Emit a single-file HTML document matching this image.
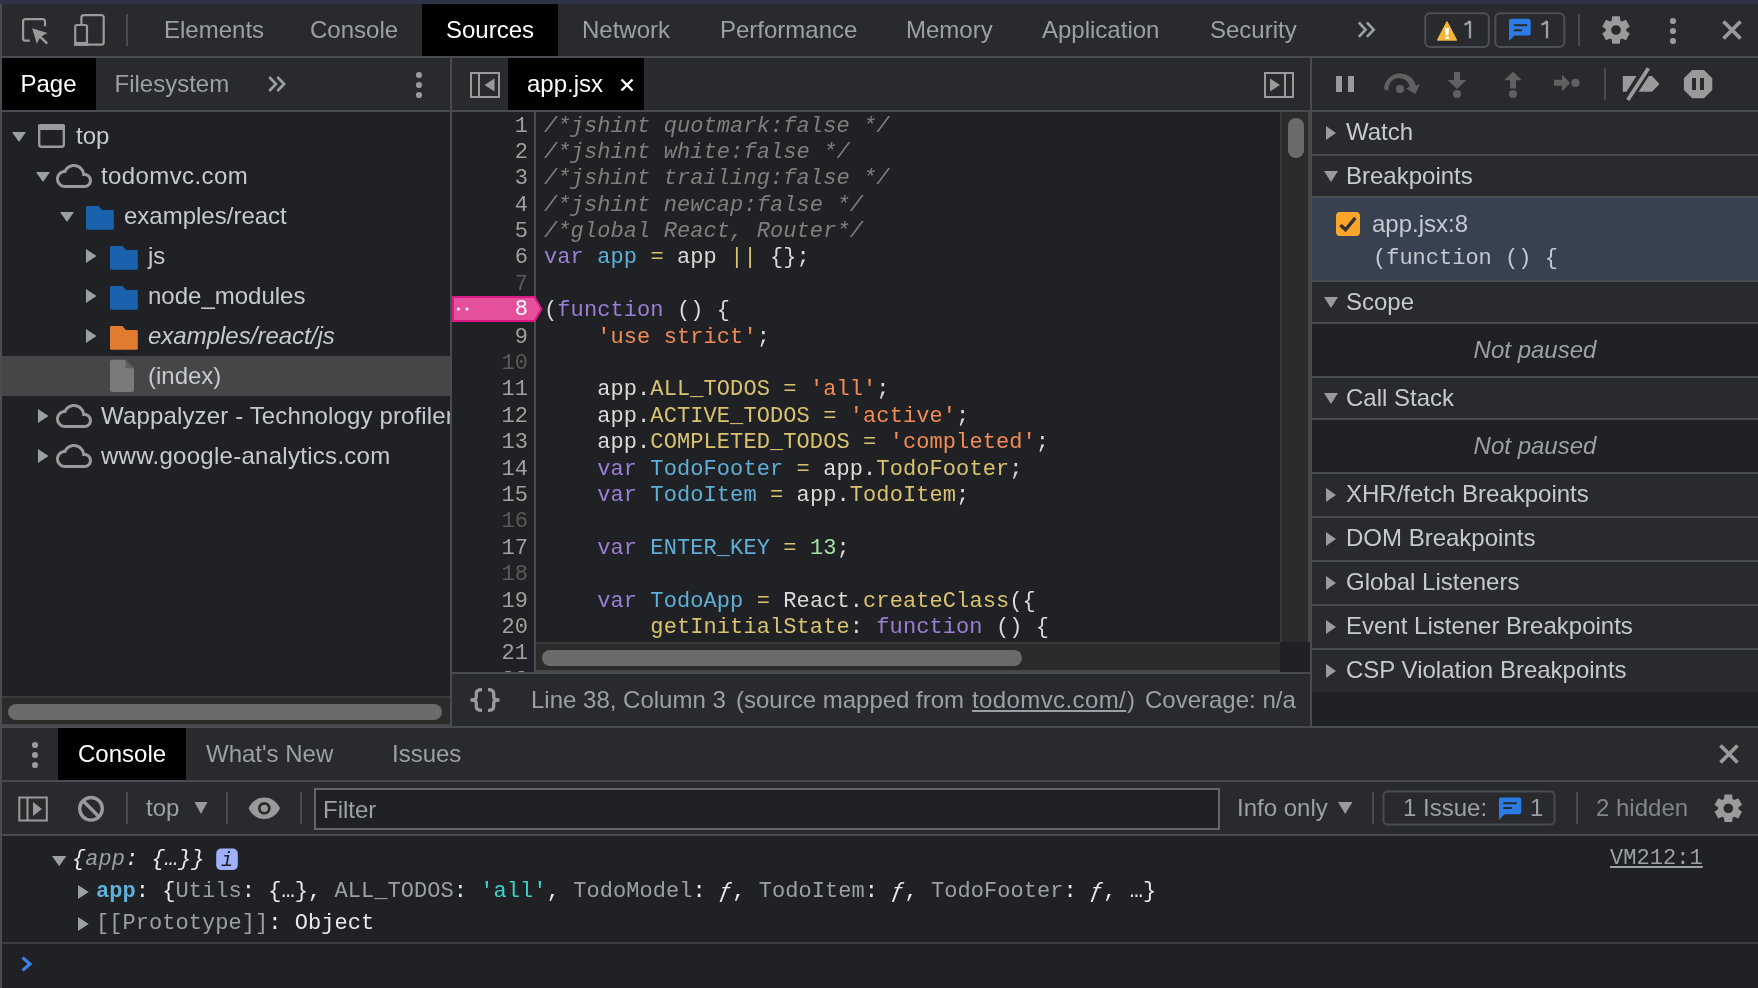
<!DOCTYPE html>
<html><head><meta charset="utf-8">
<style>
*{box-sizing:border-box;margin:0;padding:0}
html,body{width:1758px;height:988px;overflow:hidden;background:#202124;font-family:"Liberation Sans",sans-serif;-webkit-font-smoothing:antialiased;}
.a{position:absolute}
.tb{background:#292a2d}
.bd{background:#494c50}
.txt{font-size:24px;color:#9aa0a6;white-space:nowrap;line-height:28px}
.mono{font-family:"Liberation Mono",monospace}
svg{position:absolute;overflow:visible}
.ln{height:26.4px;line-height:26.4px;font-size:22px;white-space:pre}
.code .ln{letter-spacing:0.09px}
.code .ln{color:#dadada}
.cl{font-size:22px;line-height:28px;white-space:pre;letter-spacing:0.05px}
#root{position:absolute;left:0;top:0;width:1758px;height:988px;will-change:transform;background:#202124;overflow:hidden}
</style></head><body><div id="root">
<!-- top strip -->
<div class="a" style="left:0;top:0;width:1758px;height:4px;background:#2f3346"></div>
<!-- left border -->
<div class="a bd" style="left:0;top:4px;width:2px;height:984px"></div>

<!-- MAIN TOOLBAR -->
<div class="a tb" style="left:2px;top:4px;width:1756px;height:52px"></div>
<div class="a bd" style="left:2px;top:56px;width:1756px;height:2px"></div>


<!-- main toolbar content -->
<svg style="left:0;top:0" width="1758" height="58">
 <g fill="none" stroke="#9a9a9a" stroke-width="2.2">
  <path d="M45 26.2 V21.5 Q45 19.1 42.6 19.1 H25.5 Q23.1 19.1 23.1 21.5 V38.3 Q23.1 40.7 25.5 40.7 H29.8"/>
 </g>
 <path d="M32.2 28.2 L47.5 33 L41.5 36.2 L48.1 42.8 L46.3 44.6 L39.8 38 L36.8 43.8 Z" fill="#9a9a9a"/>
 <g fill="none" stroke="#9a9a9a" stroke-width="2.2">
  <path d="M81.4 24 V17.5 Q81.4 15.1 83.8 15.1 H101.3 Q103.7 15.1 103.7 17.5 V42.3 Q103.7 44.7 101.3 44.7 H86.6"/>
  <rect x="75.2" y="25" width="11.8" height="19.7" rx="1.8"/>
 </g>
 <rect x="74.1" y="41.9" width="13.9" height="4" fill="#9a9a9a"/>
 <rect x="126" y="14" width="2" height="32" fill="#494c50"/>
 <path d="M1358.8 22.5 L1365.6 29.7 L1358.8 36.9 M1366.9 22.5 L1373.7 29.7 L1366.9 36.9" fill="none" stroke="#9aa0a6" stroke-width="2.6"/>
 <rect x="1425.2" y="13.2" width="63.6" height="33.8" rx="5" fill="none" stroke="#4d5054" stroke-width="2"/>
 <path d="M1447 22 L1456.3 40 H1437.7 Z" fill="#f3b638" stroke="#f3b638" stroke-width="1.5" stroke-linejoin="round"/>
 <path d="M1444.9 28 H1449.1 L1448.4 35.2 H1445.6 Z" fill="#fff"/>
 <rect x="1445.4" y="36.6" width="3.4" height="2.4" fill="#fff"/>
 <rect x="1495.3" y="13.2" width="69" height="33.8" rx="5" fill="none" stroke="#4d5054" stroke-width="2"/>
 <path d="M1511.5 18.8 H1528.2 Q1530.7 18.8 1530.7 21.3 V33 Q1530.7 35.5 1528.2 35.5 H1514.5 L1509 41 V21.3 Q1509 18.8 1511.5 18.8 Z" fill="#2c7ce5"/>
 <rect x="1513.9" y="24.2" width="13.2" height="2" fill="#292a2d"/>
 <rect x="1513.9" y="29.3" width="8.1" height="2" fill="#292a2d"/>
 <rect x="1578" y="14" width="2" height="32" fill="#494c50"/>
 <g transform="translate(1616 30)" fill="#9a9a9a">
  <path d="M-4.30 -9.36 L-3.80 -13.68 L3.80 -13.68 L4.30 -9.36 L5.96 -8.40 L9.95 -10.13 L13.75 -3.55 L10.26 -0.96 L10.26 0.96 L13.75 3.55 L9.95 10.13 L5.96 8.40 L4.30 9.36 L3.80 13.68 L-3.80 13.68 L-4.30 9.36 L-5.96 8.40 L-9.95 10.13 L-13.75 3.55 L-10.26 0.96 L-10.26 -0.96 L-13.75 -3.55 L-9.95 -10.13 L-5.96 -8.40 Z M0 -4.8 A4.8 4.8 0 1 0 0.01 -4.8 Z" fill-rule="evenodd"/>
 </g>
 <circle cx="1673" cy="21" r="3.1" fill="#9a9a9a"/>
 <circle cx="1673" cy="31" r="3.1" fill="#9a9a9a"/>
 <circle cx="1673" cy="41" r="3.1" fill="#9a9a9a"/>
 <path d="M1723.5 21.5 L1740.5 38.5 M1740.5 21.5 L1723.5 38.5" stroke="#9a9a9a" stroke-width="3.8"/>
</svg>
<div class="a" style="left:422px;top:4px;width:136px;height:52px;background:#000"></div>
<div class="a txt" style="left:164px;top:16px">Elements</div>
<div class="a txt" style="left:310px;top:16px">Console</div>
<div class="a txt" style="left:446px;top:16px;color:#fff">Sources</div>
<div class="a txt" style="left:582px;top:16px">Network</div>
<div class="a txt" style="left:720px;top:16px">Performance</div>
<div class="a txt" style="left:906px;top:16px">Memory</div>
<div class="a txt" style="left:1042px;top:16px">Application</div>
<div class="a txt" style="left:1210px;top:16px">Security</div>
<svg style="left:0;top:0" width="1" height="1"><path d="M1470 21 V38.3 M1464.5 24.6 Q1468.3 23.6 1470 21" fill="none" stroke="#9aa0a6" stroke-width="2.3"/></svg>
<svg style="left:0;top:0" width="1" height="1"><path d="M1547 21 V38.3 M1541.5 24.6 Q1545.3 23.6 1547 21" fill="none" stroke="#9aa0a6" stroke-width="2.3"/></svg>

<!-- PANELS -->
<div id="nav" class="a" style="left:2px;top:58px;width:448px;height:668px;background:#202124"></div>

<!-- NAVIGATOR -->
<div class="a tb" style="left:2px;top:58px;width:448px;height:52px"></div>
<div class="a" style="left:2px;top:58px;width:94px;height:52px;background:#000"></div>
<div class="a bd" style="left:2px;top:110px;width:448px;height:2px"></div>
<div class="a txt" style="left:20.5px;top:70px;color:#fff">Page</div>
<div class="a txt" style="left:114.5px;top:70px">Filesystem</div>
<svg style="left:0;top:0" width="450" height="112">
 <path d="M269.2 77 L276 84 L269.2 91 M277.3 77 L284.1 84 L277.3 91" fill="none" stroke="#9aa0a6" stroke-width="2.6"/>
 <circle cx="419" cy="75" r="3.1" fill="#9a9a9a"/>
 <circle cx="419" cy="85" r="3.1" fill="#9a9a9a"/>
 <circle cx="419" cy="95" r="3.1" fill="#9a9a9a"/>
</svg>
<div class="a" style="left:2px;top:356px;width:448px;height:40px;background:#464646"></div>
<svg style="left:0;top:0" width="450" height="480">
 <g fill="#9aa0a6">
  <path d="M12 132 H26 L19 142 Z"/>
  <path d="M36 172 H50 L43 182 Z"/>
  <path d="M60 212 H74 L67 222 Z"/>
  <path d="M86 249 V263 L96.5 256 Z"/>
  <path d="M86 289 V303 L96.5 296 Z"/>
  <path d="M86 329 V343 L96.5 336 Z"/>
  <path d="M38 409 V423 L48.5 416 Z"/>
  <path d="M38 449 V463 L48.5 456 Z"/>
 </g>
 <!-- frame icon -->
 <rect x="39.2" y="125.2" width="24.6" height="21.6" rx="2.2" fill="none" stroke="#9a9a9a" stroke-width="2.4"/>
 <rect x="38" y="124" width="27" height="6" rx="2" fill="#9a9a9a"/>
 <!-- clouds -->
 <g fill="#9a9a9a">
  <path transform="translate(56 158) scale(1.5)" fill-rule="evenodd" d="M19.35 10.04C18.67 6.59 15.64 4 12 4 9.11 4 6.6 5.64 5.35 8.04 2.34 8.36 0 10.91 0 14c0 3.31 2.69 6 6 6h13c2.76 0 5-2.24 5-5 0-2.64-2.05-4.78-4.65-4.96zM19 18H6c-2.21 0-4-1.79-4-4s1.79-4 4-4h.71C7.37 7.69 9.48 6 12 6c3.04 0 5.5 2.46 5.5 5.5v.5H19c1.66 0 3 1.340 3 3s-1.34 3-3 3z"/>
  <path transform="translate(56 398) scale(1.5)" fill-rule="evenodd" d="M19.35 10.04C18.67 6.59 15.64 4 12 4 9.11 4 6.6 5.64 5.35 8.04 2.34 8.36 0 10.91 0 14c0 3.31 2.69 6 6 6h13c2.76 0 5-2.24 5-5 0-2.64-2.05-4.78-4.65-4.96zM19 18H6c-2.21 0-4-1.79-4-4s1.79-4 4-4h.71C7.37 7.69 9.48 6 12 6c3.04 0 5.5 2.46 5.5 5.5v.5H19c1.66 0 3 1.340 3 3s-1.34 3-3 3z"/>
  <path transform="translate(56 438) scale(1.5)" fill-rule="evenodd" d="M19.35 10.04C18.67 6.59 15.64 4 12 4 9.11 4 6.6 5.64 5.35 8.04 2.34 8.36 0 10.91 0 14c0 3.31 2.69 6 6 6h13c2.76 0 5-2.24 5-5 0-2.64-2.05-4.78-4.65-4.96zM19 18H6c-2.21 0-4-1.79-4-4s1.79-4 4-4h.71C7.37 7.69 9.48 6 12 6c3.04 0 5.5 2.46 5.5 5.5v.5H19c1.66 0 3 1.340 3 3s-1.34 3-3 3z"/>
 </g>
 <!-- folders -->
 <path d="M86 207.2 Q86 206 87.2 206 H98.4 L102 210 H112.6 Q113.8 210 113.8 211.2 V228.5 Q113.8 229.7 112.6 229.7 H87.2 Q86 229.7 86 228.5 Z" fill="#1a62ae"/>
 <path d="M110 247.2 Q110 246 111.2 246 H122.4 L126 250 H136.6 Q137.8 250 137.8 251.2 V268.5 Q137.8 269.7 136.6 269.7 H111.2 Q110 269.7 110 268.5 Z" fill="#1a62ae"/>
 <path d="M110 287.2 Q110 286 111.2 286 H122.4 L126 290 H136.6 Q137.8 290 137.8 291.2 V308.5 Q137.8 309.7 136.6 309.7 H111.2 Q110 309.7 110 308.5 Z" fill="#1a62ae"/>
 <path d="M110 327.2 Q110 326 111.2 326 H122.4 L126 330 H136.6 Q137.8 330 137.8 331.2 V348.5 Q137.8 349.7 136.6 349.7 H111.2 Q110 349.7 110 348.5 Z" fill="#e07b30"/>
 <!-- file -->
 <path d="M112 359.7 H125.5 L134 368.2 V390 Q134 392 132 392 H112 Q110 392 110 390 V361.7 Q110 359.7 112 359.7 Z" fill="#7a7a7a"/>
 <path d="M125.5 359.7 V368.2 H134 Z" fill="#464646" opacity="0.55"/>
</svg>
<div class="a txt" style="left:76px;top:122px;color:#c5cad1">top</div>
<div class="a txt" style="left:101px;top:162px;color:#c5cad1;letter-spacing:0.4px">todomvc.com</div>
<div class="a txt" style="left:124px;top:202px;color:#c5cad1">examples/react</div>
<div class="a txt" style="left:148px;top:242px;color:#c5cad1">js</div>
<div class="a txt" style="left:148px;top:282px;color:#c5cad1">node_modules</div>
<div class="a txt" style="left:148px;top:322px;color:#c5cad1;font-style:italic">examples/react/js</div>
<div class="a txt" style="left:148px;top:362px;color:#c5cad1">(index)</div>
<div class="a" style="left:2px;top:402px;width:448px;height:40px;overflow:hidden"><div class="a txt" style="left:99px;top:0;color:#c5cad1;letter-spacing:0.15px">Wappalyzer - Technology profiler</div></div>
<div class="a txt" style="left:101px;top:442px;color:#c5cad1;letter-spacing:0.28px">www.google-analytics.com</div>
<!-- nav h scrollbar -->
<div class="a" style="left:2px;top:696px;width:448px;height:30px;background:#2b2b2b;border-top:2px solid #3b3b3b;border-bottom:2px solid #474747"></div>
<div class="a" style="left:8px;top:704px;width:434px;height:16px;border-radius:8px;background:#6b6b6b"></div>

<div class="a bd" style="left:450px;top:58px;width:2px;height:668px"></div>
<div id="ed" class="a" style="left:452px;top:58px;width:858px;height:668px;background:#202124"></div>

<!-- EDITOR -->
<div class="a tb" style="left:452px;top:58px;width:858px;height:52px"></div>
<div class="a" style="left:508px;top:58px;width:136px;height:52px;background:#000"></div>
<div class="a bd" style="left:452px;top:110px;width:858px;height:2px"></div>
<div class="a txt" style="left:527px;top:70px;color:#fff">app.jsx</div>
<svg style="left:0;top:0" width="1310" height="112">
 <rect x="471" y="73" width="28" height="24" fill="none" stroke="#9a9a9a" stroke-width="2"/>
 <rect x="478" y="73" width="2" height="24" fill="#9a9a9a"/>
 <path d="M494.5 78.5 V91.5 L484.5 85 Z" fill="#9a9a9a"/>
 <path d="M621.5 79.5 L632.5 90.5 M632.5 79.5 L621.5 90.5" stroke="#fff" stroke-width="2.4"/>
 <rect x="1265" y="73" width="28" height="24" fill="none" stroke="#9a9a9a" stroke-width="2"/>
 <rect x="1284" y="73" width="2" height="24" fill="#9a9a9a"/>
 <path d="M1270 78.5 V91.5 L1280 85 Z" fill="#9a9a9a"/>
</svg>
<div class="a" style="left:452px;top:112px;width:828px;height:560px;overflow:hidden;background:#202124">
 <div class="a mono gut" style="left:0;top:1.5px;width:76px;text-align:right"><div class="ln" style="color:#a0a0a0">1</div><div class="ln" style="color:#a0a0a0">2</div><div class="ln" style="color:#a0a0a0">3</div><div class="ln" style="color:#a0a0a0">4</div><div class="ln" style="color:#a0a0a0">5</div><div class="ln" style="color:#a0a0a0">6</div><div class="ln" style="color:#5a5a5a">7</div><div class="ln" style="color:#a0a0a0">8</div><div class="ln" style="color:#a0a0a0">9</div><div class="ln" style="color:#5a5a5a">10</div><div class="ln" style="color:#a0a0a0">11</div><div class="ln" style="color:#a0a0a0">12</div><div class="ln" style="color:#a0a0a0">13</div><div class="ln" style="color:#a0a0a0">14</div><div class="ln" style="color:#a0a0a0">15</div><div class="ln" style="color:#5a5a5a">16</div><div class="ln" style="color:#a0a0a0">17</div><div class="ln" style="color:#5a5a5a">18</div><div class="ln" style="color:#a0a0a0">19</div><div class="ln" style="color:#a0a0a0">20</div><div class="ln" style="color:#a0a0a0">21</div><div class="ln" style="color:#a0a0a0">22</div></div>
 <div class="a bd" style="left:82px;top:0;width:2px;height:560px"></div>
 <div class="a mono code" style="left:92px;top:1.5px"><div class="ln"><i style="color:#7f7f7f">/*jshint quotmark:false */</i>&#8203;</div><div class="ln"><i style="color:#7f7f7f">/*jshint white:false */</i>&#8203;</div><div class="ln"><i style="color:#7f7f7f">/*jshint trailing:false */</i>&#8203;</div><div class="ln"><i style="color:#7f7f7f">/*jshint newcap:false */</i>&#8203;</div><div class="ln"><i style="color:#7f7f7f">/*global React, Router*/</i>&#8203;</div><div class="ln"><span style="color:#9a7fd5">var</span><span style="color:#dadada"> </span><span style="color:#5db0d7">app</span><span style="color:#dadada"> </span><span style="color:#d9c36e">=</span><span style="color:#dadada"> app </span><span style="color:#d9c36e">||</span><span style="color:#dadada"> {};</span>&#8203;</div><div class="ln">&#8203;</div><div class="ln"><span style="color:#dadada">(</span><span style="color:#9a7fd5">function</span><span style="color:#dadada"> () {</span>&#8203;</div><div class="ln"><span style="color:#dadada">    </span><span style="color:#f28b54">'use strict'</span><span style="color:#dadada">;</span>&#8203;</div><div class="ln">&#8203;</div><div class="ln"><span style="color:#dadada">    app.</span><span style="color:#d9c36e">ALL_TODOS</span><span style="color:#dadada"> </span><span style="color:#d9c36e">=</span><span style="color:#dadada"> </span><span style="color:#f28b54">'all'</span><span style="color:#dadada">;</span>&#8203;</div><div class="ln"><span style="color:#dadada">    app.</span><span style="color:#d9c36e">ACTIVE_TODOS</span><span style="color:#dadada"> </span><span style="color:#d9c36e">=</span><span style="color:#dadada"> </span><span style="color:#f28b54">'active'</span><span style="color:#dadada">;</span>&#8203;</div><div class="ln"><span style="color:#dadada">    app.</span><span style="color:#d9c36e">COMPLETED_TODOS</span><span style="color:#dadada"> </span><span style="color:#d9c36e">=</span><span style="color:#dadada"> </span><span style="color:#f28b54">'completed'</span><span style="color:#dadada">;</span>&#8203;</div><div class="ln"><span style="color:#dadada">    </span><span style="color:#9a7fd5">var</span><span style="color:#dadada"> </span><span style="color:#5db0d7">TodoFooter</span><span style="color:#dadada"> </span><span style="color:#d9c36e">=</span><span style="color:#dadada"> app.</span><span style="color:#d9c36e">TodoFooter</span><span style="color:#dadada">;</span>&#8203;</div><div class="ln"><span style="color:#dadada">    </span><span style="color:#9a7fd5">var</span><span style="color:#dadada"> </span><span style="color:#5db0d7">TodoItem</span><span style="color:#dadada"> </span><span style="color:#d9c36e">=</span><span style="color:#dadada"> app.</span><span style="color:#d9c36e">TodoItem</span><span style="color:#dadada">;</span>&#8203;</div><div class="ln">&#8203;</div><div class="ln"><span style="color:#dadada">    </span><span style="color:#9a7fd5">var</span><span style="color:#dadada"> </span><span style="color:#5db0d7">ENTER_KEY</span><span style="color:#dadada"> </span><span style="color:#d9c36e">=</span><span style="color:#dadada"> </span><span style="color:#a1e3a4">13</span><span style="color:#dadada">;</span>&#8203;</div><div class="ln">&#8203;</div><div class="ln"><span style="color:#dadada">    </span><span style="color:#9a7fd5">var</span><span style="color:#dadada"> </span><span style="color:#5db0d7">TodoApp</span><span style="color:#dadada"> </span><span style="color:#d9c36e">=</span><span style="color:#dadada"> React.</span><span style="color:#d9c36e">createClass</span><span style="color:#dadada">({</span>&#8203;</div><div class="ln"><span style="color:#dadada">        </span><span style="color:#d9c36e">getInitialState</span><span style="color:#dadada">: </span><span style="color:#9a7fd5">function</span><span style="color:#dadada"> () {</span>&#8203;</div><div class="ln"><span style="color:#dadada">            </span><span style="color:#9a7fd5">return</span><span style="color:#dadada"> {</span>&#8203;</div><div class="ln"><span style="color:#dadada">                </span><span style="color:#d9c36e">nowShowing</span><span style="color:#dadada">: app.</span><span style="color:#d9c36e">ALL_TODOS</span><span style="color:#dadada">,</span>&#8203;</div></div>
</div>
<div class="a" style="left:1280px;top:112px;width:30px;height:560px;background:#2b2b2b;border-left:2px solid #3a3a3a;border-right:2px solid #474747"></div>
<div class="a" style="left:1288px;top:118px;width:16px;height:40px;border-radius:8px;background:#6b6b6b"></div>
<div class="a" style="left:536px;top:642px;width:744px;height:30px;background:#2b2b2b;border-top:2px solid #3a3a3a;border-bottom:2px solid #474747"></div>
<div class="a" style="left:542px;top:650px;width:480px;height:16px;border-radius:8px;background:#6b6b6b"></div>
<div class="a" style="left:1280px;top:642px;width:30px;height:30px;background:#202124"></div>
<!-- breakpoint marker -->
<svg style="left:0;top:0" width="560" height="330">
 <path d="M453 297 H534.5 L541.5 309 L534.5 321 H453 Z" fill="#e54f9c" stroke="#d81b86" stroke-width="2"/>
 <circle cx="458.4" cy="309" r="1.6" fill="#fff"/>
 <circle cx="467" cy="309" r="1.6" fill="#fff"/>
</svg>
<div class="a mono" style="left:452px;top:297px;width:76px;text-align:right;color:#fff;font-size:22px;line-height:26px">8</div>
<div class="a bd" style="left:452px;top:672px;width:858px;height:2px"></div>
<div class="a tb" style="left:452px;top:674px;width:858px;height:52px"></div>
<svg style="left:0;top:0" width="1" height="1"><path d="M482 689.6 Q476.3 689.6 476.3 693.5 V697 Q476.3 700 470.5 700 Q476.3 700 476.3 703 V706.5 Q476.3 710.4 482 710.4 M488 689.6 Q493.7 689.6 493.7 693.5 V697 Q493.7 700 499.5 700 Q493.7 700 493.7 703 V706.5 Q493.7 710.4 488 710.4" fill="none" stroke="#9a9a9a" stroke-width="3.3"/></svg>
<div class="a txt" style="left:531px;top:686px">Line 38, Column 3</div>
<div class="a txt" style="left:736px;top:686px">(source mapped from</div><div class="a txt" style="left:972px;top:686px;text-decoration:underline;letter-spacing:0.4px">todomvc.com/</div><div class="a txt" style="left:1127px;top:686px">)</div>
<div class="a txt" style="left:1145px;top:686px">Coverage: n/a</div>


<div class="a bd" style="left:1310px;top:58px;width:2px;height:668px"></div>
<div id="side" class="a" style="left:1312px;top:58px;width:446px;height:668px;background:#202124"></div>

<!-- SIDEBAR -->
<div class="a tb" style="left:1312px;top:58px;width:446px;height:52px"></div>
<div class="a bd" style="left:1312px;top:110px;width:446px;height:2px"></div>
<svg style="left:0;top:0" width="1758" height="112">
 <rect x="1336" y="76" width="6" height="16" fill="#9a9a9a"/>
 <rect x="1348" y="76" width="6" height="16" fill="#9a9a9a"/>
 <g fill="#606060">
  <path d="M1384 89.3 A16.2 16.2 0 0 1 1415.9 85.7 L1419.9 84 L1415.4 93.9 L1406 88.6 L1409.7 86.8 A10.5 10.5 0 0 0 1388.6 90.8 Z"/>
  <circle cx="1400" cy="89" r="4.1"/>
  <rect x="1454" y="72" width="6" height="9"/>
  <path d="M1447.5 80 H1466.5 L1457 89 Z"/>
  <circle cx="1457" cy="94" r="4.1"/>
  <rect x="1510" y="80" width="6" height="8.5"/>
  <path d="M1504 80.3 H1522 L1513 71.8 Z"/>
  <circle cx="1513" cy="94" r="4.1"/>
  <rect x="1554" y="79.8" width="8.5" height="6"/>
  <path d="M1562 74.4 V91.4 L1570 82.9 Z"/>
  <circle cx="1575.5" cy="82.9" r="4.1"/>
 </g>
 <rect x="1604" y="68" width="2" height="32" fill="#494c50"/>
 <path d="M1622.8 76 H1636.5 L1626.5 91.7 H1622.8 Z M1642.5 76 H1652 L1659.5 83.9 L1652 91.7 H1632.5 Z" fill="#9a9a9a"/>
 <path d="M1627.8 100 L1648.4 68.2" stroke="#292a2d" stroke-width="9"/><path d="M1627.8 100 L1648.4 68.2" stroke="#9a9a9a" stroke-width="3.8"/>
 <path d="M1692.2 69.9 H1704 L1712.3 78.2 V90 L1704 98.3 H1692.2 L1683.9 90 V78.2 Z" fill="#9a9a9a"/>
 <rect x="1692" y="78" width="4" height="12" fill="#292a2d"/>
 <rect x="1700" y="78" width="4" height="12" fill="#292a2d"/>
</svg>
<div class="a tb" style="left:1312px;top:112px;width:446px;height:42px"></div><div class="a bd" style="left:1312px;top:154px;width:446px;height:2px"></div><svg style="left:0;top:0" width="1" height="1"><path d="M1326 126.0 V140.0 L1336 133.0 Z" fill="#9a9a9a"/></svg><div class="a txt" style="left:1346px;top:118px;color:#c5cad1">Watch</div><div class="a tb" style="left:1312px;top:156px;width:446px;height:40px"></div><div class="a bd" style="left:1312px;top:196px;width:446px;height:2px"></div><svg style="left:0;top:0" width="1" height="1"><path d="M1324 171.0 H1338 L1331 182.0 Z" fill="#9a9a9a"/></svg><div class="a txt" style="left:1346px;top:162.0px;color:#c5cad1">Breakpoints</div>
<div class="a" style="left:1312px;top:198px;width:446px;height:82px;background:#384150"></div>
<div class="a bd" style="left:1312px;top:280px;width:446px;height:2px"></div>
<div class="a" style="left:1336px;top:212px;width:24px;height:24px;border-radius:4px;background:#fca52a"></div>
<svg style="left:0;top:0" width="1" height="1"><path d="M1340.4 225 L1345.5 229.8 L1355.3 217.8" fill="none" stroke="#333" stroke-width="3.5"/></svg>
<div class="a txt" style="left:1372px;top:210px;color:#c5cad1">app.jsx:8</div>
<div class="a mono" style="left:1373px;top:245px;font-size:22px;line-height:28px;color:#c5cad1;white-space:pre">(function () {</div>
<div class="a tb" style="left:1312px;top:282px;width:446px;height:40px"></div><div class="a bd" style="left:1312px;top:322px;width:446px;height:2px"></div><svg style="left:0;top:0" width="1" height="1"><path d="M1324 297.0 H1338 L1331 308.0 Z" fill="#9a9a9a"/></svg><div class="a txt" style="left:1346px;top:288.0px;color:#c5cad1">Scope</div><div class="a" style="left:1312px;top:324px;width:446px;height:52px;background:#202124"></div><div class="a bd" style="left:1312px;top:376px;width:446px;height:2px"></div><div class="a txt" style="left:1312px;width:446px;text-align:center;top:336.0px;font-style:italic">Not paused</div><div class="a tb" style="left:1312px;top:378px;width:446px;height:40px"></div><div class="a bd" style="left:1312px;top:418px;width:446px;height:2px"></div><svg style="left:0;top:0" width="1" height="1"><path d="M1324 393.0 H1338 L1331 404.0 Z" fill="#9a9a9a"/></svg><div class="a txt" style="left:1346px;top:384.0px;color:#c5cad1">Call Stack</div><div class="a" style="left:1312px;top:420px;width:446px;height:52px;background:#202124"></div><div class="a bd" style="left:1312px;top:472px;width:446px;height:2px"></div><div class="a txt" style="left:1312px;width:446px;text-align:center;top:432.0px;font-style:italic">Not paused</div><div class="a tb" style="left:1312px;top:474px;width:446px;height:42px"></div><div class="a bd" style="left:1312px;top:516px;width:446px;height:2px"></div><svg style="left:0;top:0" width="1" height="1"><path d="M1326 488.0 V502.0 L1336 495.0 Z" fill="#9a9a9a"/></svg><div class="a txt" style="left:1346px;top:480px;color:#c5cad1">XHR/fetch Breakpoints</div><div class="a tb" style="left:1312px;top:518px;width:446px;height:42px"></div><div class="a bd" style="left:1312px;top:560px;width:446px;height:2px"></div><svg style="left:0;top:0" width="1" height="1"><path d="M1326 532.0 V546.0 L1336 539.0 Z" fill="#9a9a9a"/></svg><div class="a txt" style="left:1346px;top:524px;color:#c5cad1">DOM Breakpoints</div><div class="a tb" style="left:1312px;top:562px;width:446px;height:42px"></div><div class="a bd" style="left:1312px;top:604px;width:446px;height:2px"></div><svg style="left:0;top:0" width="1" height="1"><path d="M1326 576.0 V590.0 L1336 583.0 Z" fill="#9a9a9a"/></svg><div class="a txt" style="left:1346px;top:568px;color:#c5cad1">Global Listeners</div><div class="a tb" style="left:1312px;top:606px;width:446px;height:42px"></div><div class="a bd" style="left:1312px;top:648px;width:446px;height:2px"></div><svg style="left:0;top:0" width="1" height="1"><path d="M1326 620.0 V634.0 L1336 627.0 Z" fill="#9a9a9a"/></svg><div class="a txt" style="left:1346px;top:612px;color:#c5cad1">Event Listener Breakpoints</div>
<div class="a tb" style="left:1312px;top:650px;width:446px;height:42px"></div>
<svg style="left:0;top:0" width="1" height="1"><path d="M1326 664 V678 L1336 671 Z" fill="#9a9a9a"/></svg>
<div class="a txt" style="left:1346px;top:656px;color:#c5cad1">CSP Violation Breakpoints</div>

<div class="a bd" style="left:2px;top:726px;width:1756px;height:2px"></div>

<!-- DRAWER -->
<div class="a tb" style="left:2px;top:728px;width:1756px;height:52px"></div>
<div class="a bd" style="left:2px;top:780px;width:1756px;height:2px"></div>
<div class="a tb" style="left:2px;top:782px;width:1756px;height:52px"></div>
<div class="a bd" style="left:2px;top:834px;width:1756px;height:2px"></div>


<!-- DRAWER CONTENT -->
<div class="a" style="left:58px;top:728px;width:128px;height:52px;background:#000"></div>
<div class="a txt" style="left:78px;top:740px;color:#fff">Console</div>
<div class="a txt" style="left:206px;top:740px">What's New</div>
<div class="a txt" style="left:392px;top:740px">Issues</div>
<div class="a" style="left:314px;top:788px;width:906px;height:42px;background:#202124;border:2px solid #666"></div>
<div class="a txt" style="left:323px;top:796px;color:#9aa0a6">Filter</div>
<div class="a txt" style="left:146px;top:794px">top</div>
<div class="a txt" style="left:1237px;top:794px">Info only</div>
<div class="a txt" style="left:1403px;top:794px">1 Issue:</div>
<div class="a txt" style="left:1530px;top:794px">1</div>
<div class="a txt" style="left:1596px;top:794px;color:#80868b">2 hidden</div>
<svg style="left:0;top:0" width="1758" height="988">
 <circle cx="35" cy="745" r="3.1" fill="#9a9a9a"/>
 <circle cx="35" cy="755" r="3.1" fill="#9a9a9a"/>
 <circle cx="35" cy="765" r="3.1" fill="#9a9a9a"/>
 <path d="M1720.5 745.5 L1737.5 762.5 M1737.5 745.5 L1720.5 762.5" stroke="#9a9a9a" stroke-width="3.8"/>
 <rect x="19.3" y="797.5" width="27.5" height="23" fill="none" stroke="#9a9a9a" stroke-width="2"/>
 <rect x="26.5" y="797.5" width="2" height="23" fill="#9a9a9a"/>
 <path d="M33 802 V816 L42 809 Z" fill="#9a9a9a"/>
 <circle cx="91" cy="808.8" r="11.3" fill="none" stroke="#9a9a9a" stroke-width="3.4"/>
 <path d="M83 800.8 L99 816.8" stroke="#9a9a9a" stroke-width="3.4"/>
 <rect x="126" y="792" width="2" height="32" fill="#494c50"/>
 <path d="M194.5 802 H207.5 L201 814 Z" fill="#9a9a9a"/>
 <rect x="226" y="792" width="2" height="32" fill="#494c50"/>
 <path d="M248.5 808.3 C252.5 800.5 258 797.6 264.3 797.6 C270.5 797.6 276 800.5 280 808.3 C276 816.1 270.5 819 264.3 819 C258 819 252.5 816.1 248.5 808.3 Z" fill="#9a9a9a"/>
 <circle cx="264.3" cy="808.3" r="6.3" fill="#292a2d"/>
 <circle cx="264.3" cy="808.3" r="3.6" fill="#9a9a9a"/>
 <rect x="300" y="792" width="2" height="32" fill="#494c50"/>
 <path d="M1338 802 H1352.4 L1345.2 814 Z" fill="#9a9a9a"/>
 <rect x="1372" y="792" width="2" height="32" fill="#494c50"/>
 <rect x="1383.5" y="791.5" width="171" height="33" rx="4" fill="none" stroke="#494c50" stroke-width="2"/>
 <path d="M1500.5 797.5 H1519 Q1521.3 797.5 1521.3 799.8 V812 Q1521.3 814.3 1519 814.3 H1504.5 L1499 820 V799.8 Q1499 797.5 1500.5 797.5 Z" fill="#2c7ce5"/>
 <rect x="1503.3" y="802.2" width="13.4" height="2" fill="#292a2d"/>
 <rect x="1503.3" y="807" width="8.4" height="2" fill="#292a2d"/>
 <rect x="1576" y="792" width="2" height="32" fill="#494c50"/>
 <g transform="translate(1728.3 808.3)" fill="#9a9a9a">
  <path d="M-4.30 -9.36 L-3.80 -13.68 L3.80 -13.68 L4.30 -9.36 L5.96 -8.40 L9.95 -10.13 L13.75 -3.55 L10.26 -0.96 L10.26 0.96 L13.75 3.55 L9.95 10.13 L5.96 8.40 L4.30 9.36 L3.80 13.68 L-3.80 13.68 L-4.30 9.36 L-5.96 8.40 L-9.95 10.13 L-13.75 3.55 L-10.26 0.96 L-10.26 -0.96 L-13.75 -3.55 L-9.95 -10.13 L-5.96 -8.40 Z M0 -4.8 A4.8 4.8 0 1 0 0.01 -4.8 Z" fill-rule="evenodd"/>
 </g>
 <!-- console tree triangles -->
 <path d="M52 856 H66.4 L59.2 866.3 Z" fill="#9aa0a6"/>
 <path d="M78 885 V899 L88.7 892 Z" fill="#9aa0a6"/>
 <path d="M78 917 V931 L88.7 924 Z" fill="#9aa0a6"/>
 <rect x="216.2" y="848.5" width="21.6" height="21.6" rx="5" fill="#9fb1fd"/>
 <path d="M22.6 957.6 L30 964 L22.6 970.4" fill="none" stroke="#3f82ee" stroke-width="3.2"/>
</svg>
<div class="a mono cl" style="left:72px;top:846px;font-style:italic"><span style="color:#e8eaed">{</span><span style="color:#9aa0a6">app</span><span style="color:#e8eaed">: {…}}</span></div>
<div class="a" style="left:221px;top:847px;font-family:'Liberation Mono',monospace;font-style:italic;font-size:20px;line-height:28px;color:#202124">i</div>
<div class="a mono cl" style="left:96px;top:878px"><b style="color:#5db0d7">app</b><span style="color:#e8eaed">: {</span><span style="color:#9aa0a6">Utils</span><span style="color:#e8eaed">: {…}, </span><span style="color:#9aa0a6">ALL_TODOS</span><span style="color:#e8eaed">: </span><span style="color:#3cd3c9">'all'</span><span style="color:#e8eaed">, </span><span style="color:#9aa0a6">TodoModel</span><span style="color:#e8eaed">: <i>ƒ</i>, </span><span style="color:#9aa0a6">TodoItem</span><span style="color:#e8eaed">: <i>ƒ</i>, </span><span style="color:#9aa0a6">TodoFooter</span><span style="color:#e8eaed">: <i>ƒ</i>, …}</span></div>
<div class="a mono cl" style="left:96px;top:910px"><span style="color:#9aa0a6">[[Prototype]]</span><span style="color:#e8eaed">: Object</span></div>
<div class="a mono cl" style="left:1610px;top:845px;color:#9aa0a6;text-decoration:underline">VM212:1</div>
<div class="a bd" style="left:2px;top:942px;width:1756px;height:2px;background:#3c3d40"></div>
</div></body></html>
